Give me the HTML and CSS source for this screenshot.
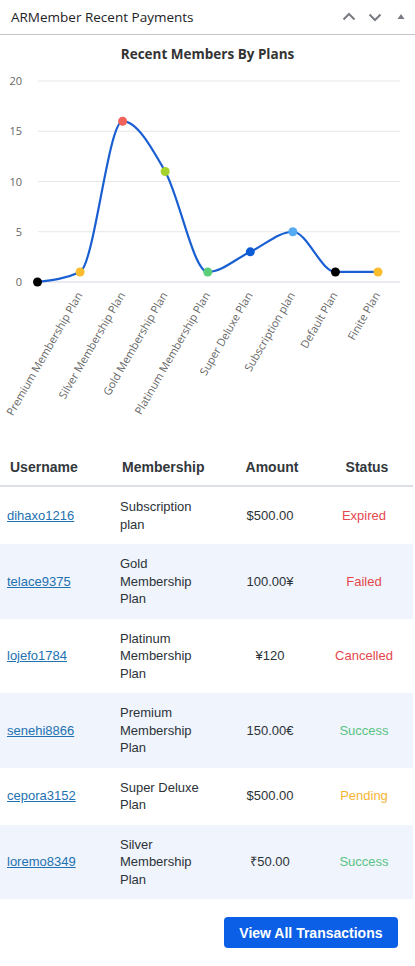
FILE: index.html
```html
<!DOCTYPE html>
<html>
<head>
<meta charset="utf-8">
<link rel="stylesheet" href="styles.css">
</head>
<body>
<div class="widget">
  <div class="widget-head">
    <h2 class="widget-title">ARMember Recent Payments</h2>
    <div class="head-actions">
      <svg class="hicon" width="16" height="16" viewBox="0 0 16 16"><path d="M2.5 10.5 L8 5 L13.5 10.5" fill="none" stroke="#787c82" stroke-width="2"/></svg>
      <svg class="hicon" width="16" height="16" viewBox="0 0 16 16"><path d="M2.5 5.5 L8 11 L13.5 5.5" fill="none" stroke="#787c82" stroke-width="2"/></svg>
      <svg class="hicon" width="16" height="16" viewBox="0 0 16 16"><path d="M4.5 10 L8 5 L11.5 10 Z" fill="#787c82"/></svg>
    </div>
  </div>
  <div class="chart-title">Recent Members By Plans</div>
  <svg class="chart" width="415" height="378" viewBox="0 0 415 378">
    <g stroke="#e6e6e6" stroke-width="1">
      <line x1="38" y1="11" x2="400" y2="11"/>
      <line x1="38" y1="61.25" x2="400" y2="61.25"/>
      <line x1="38" y1="111.5" x2="400" y2="111.5"/>
      <line x1="38" y1="161.75" x2="400" y2="161.75"/>
      <line x1="38" y1="212" x2="400" y2="212" stroke="#d3d8e0"/>
    </g>
    <g class="ylab" text-anchor="end">
      <text x="22" y="15">20</text>
      <text x="22" y="65.25">15</text>
      <text x="22" y="115.5">10</text>
      <text x="22" y="165.75">5</text>
      <text x="22" y="216">0</text>
    </g>
    <path d="M37.5,212 C51.69,210.32 65.87,208.65 80.06,201.95 C94.25,195.25 108.43,51.2 122.62,51.2 C136.81,51.2 150.99,76.33 165.18,101.45 C179.37,126.58 193.55,201.95 207.74,201.95 C221.93,201.95 236.11,188.55 250.3,181.85 C264.49,175.15 278.67,161.75 292.86,161.75 C307.05,161.75 321.23,201.95 335.42,201.95 L377.98,201.95" fill="none" stroke="#1a5fd2" stroke-width="2.2"/>
    <g>
      <circle cx="37.5" cy="212" r="4.5" fill="#000000"/>
      <circle cx="80.06" cy="201.95" r="4.5" fill="#f8bc2c"/>
      <circle cx="122.62" cy="51.2" r="4.5" fill="#f0625c"/>
      <circle cx="165.18" cy="101.45" r="4.5" fill="#a6d22c"/>
      <circle cx="207.74" cy="201.95" r="4.5" fill="#5ccd79"/>
      <circle cx="250.3" cy="181.85" r="4.5" fill="#0b5ad6"/>
      <circle cx="292.86" cy="161.75" r="4.5" fill="#57abf3"/>
      <circle cx="335.42" cy="201.95" r="4.5" fill="#000000"/>
      <circle cx="377.98" cy="201.95" r="4.5" fill="#f8bc2c"/>
    </g>
    <g class="xlab" text-anchor="end">
      <text transform="translate(83,225) rotate(-60)">Premium Membership Plan</text>
      <text transform="translate(125.5,225) rotate(-60)">Silver Membership Plan</text>
      <text transform="translate(168,225) rotate(-60)">Gold Membership Plan</text>
      <text transform="translate(210.5,225) rotate(-60)">Platinum Membership Plan</text>
      <text transform="translate(253,225) rotate(-60)">Super Deluxe Plan</text>
      <text transform="translate(295.5,225) rotate(-60)">Subscription plan</text>
      <text transform="translate(338,225) rotate(-60)">Default Plan</text>
      <text transform="translate(380.5,225) rotate(-60)">Finite Plan</text>
    </g>
  </svg>
  <table class="payments">
    <colgroup>
      <col class="c-user"><col class="c-plan"><col class="c-amt"><col class="c-status">
    </colgroup>
    <thead>
      <tr>
        <th class="th-user">Username</th>
        <th class="th-plan">Membership</th>
        <th class="th-amt">Amount</th>
        <th class="th-status">Status</th>
      </tr>
    </thead>
    <tbody>
      <tr>
        <td class="td-user"><a href="#">dihaxo1216</a></td>
        <td class="td-plan">Subscription plan</td>
        <td class="td-amt">$500.00</td>
        <td class="td-status st-red">Expired</td>
      </tr>
      <tr>
        <td class="td-user"><a href="#">telace9375</a></td>
        <td class="td-plan">Gold Membership Plan</td>
        <td class="td-amt">100.00¥</td>
        <td class="td-status st-red">Failed</td>
      </tr>
      <tr>
        <td class="td-user"><a href="#">lojefo1784</a></td>
        <td class="td-plan">Platinum Membership Plan</td>
        <td class="td-amt">¥120</td>
        <td class="td-status st-red">Cancelled</td>
      </tr>
      <tr>
        <td class="td-user"><a href="#">senehi8866</a></td>
        <td class="td-plan">Premium Membership Plan</td>
        <td class="td-amt">150.00€</td>
        <td class="td-status st-green">Success</td>
      </tr>
      <tr>
        <td class="td-user"><a href="#">cepora3152</a></td>
        <td class="td-plan">Super Deluxe Plan</td>
        <td class="td-amt">$500.00</td>
        <td class="td-status st-orange">Pending</td>
      </tr>
      <tr>
        <td class="td-user"><a href="#">loremo8349</a></td>
        <td class="td-plan">Silver Membership Plan</td>
        <td class="td-amt">₹50.00</td>
        <td class="td-status st-green">Success</td>
      </tr>
    </tbody>
  </table>
  <div class="actions">
    <a class="btn" href="#">View All Transactions</a>
  </div>
</div>
</body>
</html>
```
FILE: styles.css
```css
html, body {
  margin: 0;
  padding: 0;
  background: #ffffff;
}
body {
  font-family: "Liberation Sans", Arial, sans-serif;
  color: #2c3338;
}
.widget {
  width: 415px;
}
.widget-head {
  display: flex;
  align-items: center;
  justify-content: space-between;
  height: 34px;
  padding: 0 6px 0 11px;
  border-bottom: 1px solid #c3c4c7;
  box-sizing: content-box;
}
.widget-title {
  margin: 0;
  font-family: "Open Sans", sans-serif;
  font-size: 13.5px;
  font-weight: 400;
  color: #1d2327;
}
.head-actions {
  display: flex;
  gap: 10px;
  align-items: center;
}
.hicon {
  display: block;
}
.chart-title {
  font-family: "Open Sans", sans-serif;
  font-size: 13.5px;
  font-weight: 700;
  color: #333333;
  text-align: center;
  line-height: 20px;
  padding: 9px 0 6px;
}
.chart {
  display: block;
}
.ylab text {
  font-family: "Open Sans", sans-serif;
  font-size: 11px;
  fill: #666666;
}
.xlab text {
  font-family: "Open Sans", sans-serif;
  font-size: 11px;
  fill: #666666;
}
.payments {
  width: 413px;
  border-collapse: collapse;
  table-layout: fixed;
}
.c-user { width: 110px; }
.c-plan { width: 115px; }
.c-amt { width: 90px; }
.c-status { width: 98px; }
.payments th {
  height: 37px;
  padding: 0;
  font-size: 14px;
  font-weight: 700;
  color: #32373c;
  border-bottom: 2px solid #dcdfe7;
  vertical-align: middle;
}
.th-user { text-align: left; padding-left: 10px !important; }
.th-plan { text-align: left; padding-left: 12px !important; }
.th-amt { text-align: center; padding-left: 4px !important; }
.th-status { text-align: center; padding-left: 6px !important; }
.payments td {
  padding: 11px 0;
  font-size: 13px;
  line-height: 17.5px;
  color: #2c3338;
  vertical-align: middle;
}
.payments tbody tr:nth-child(even) td {
  background: #f0f4fc;
}
.td-user { padding-left: 7px !important; }
.td-user a {
  color: #2271b1;
  text-decoration: underline;
}
.td-plan { padding-left: 10px !important; padding-right: 15px !important; }
.td-amt { text-align: center; }
.td-status { text-align: center; }
.st-red { color: #e4474d !important; }
.st-green { color: #58c383 !important; }
.st-orange { color: #f5b432 !important; }
.actions {
  display: flex;
  justify-content: flex-end;
  padding: 18px 17px 0 0;
}
.btn {
  display: inline-flex;
  align-items: center;
  height: 31px;
  padding: 0 15.5px;
  background: #0b5ee6;
  color: #ffffff;
  font-size: 14px;
  font-weight: 700;
  text-decoration: none;
  border-radius: 4px;
}
```
